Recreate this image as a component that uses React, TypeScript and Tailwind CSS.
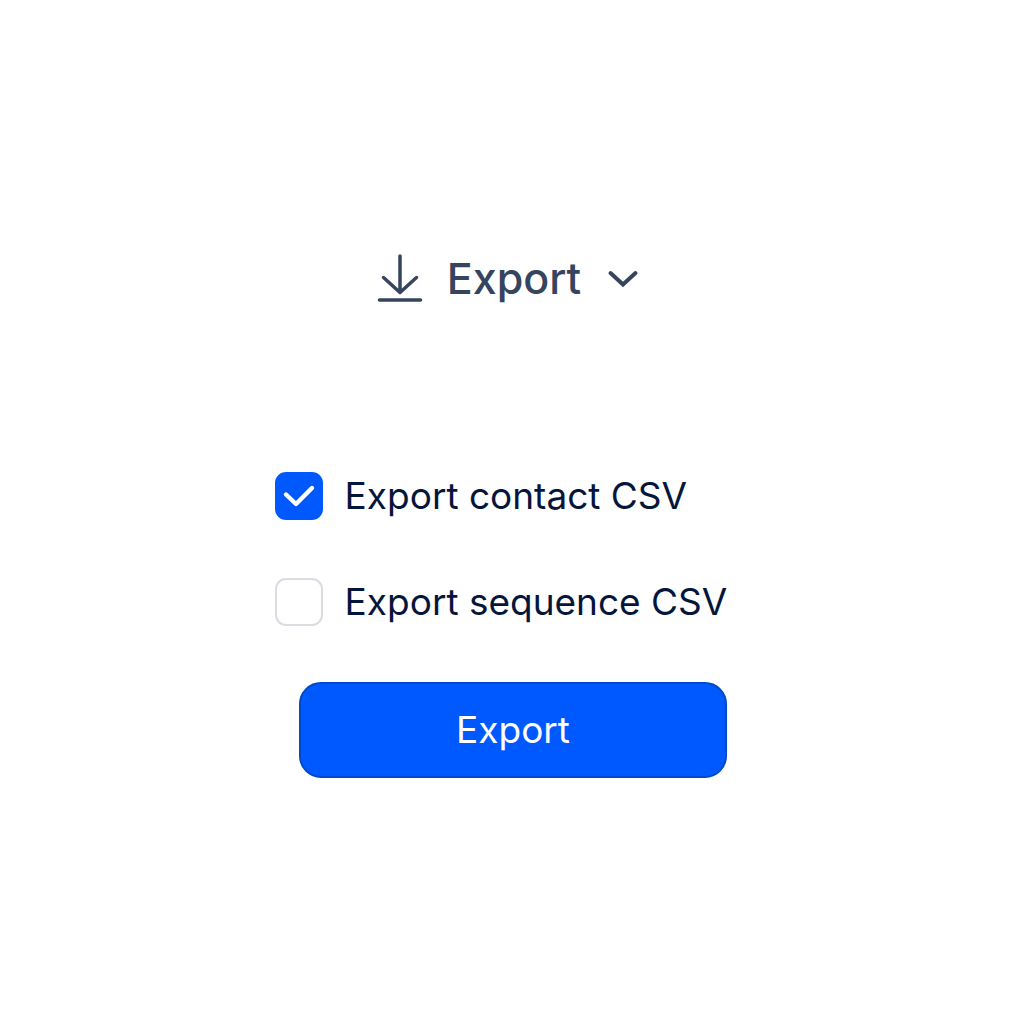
import React, { useState } from 'react';

function Option({ id, label, checked, onChange }: { id: string; label: string; checked: boolean; onChange: (v: boolean) => void }) {
  return (
    <div className="flex h-12 items-center gap-[22px]">
      <span className="relative flex size-12">
        <input
          id={id}
          type="checkbox"
          checked={checked}
          onChange={(e) => onChange(e.target.checked)}
          className="size-12 appearance-none rounded-[11px] border-2 border-[#dbdce2] bg-white checked:border-[#0059ff] checked:bg-[#0059ff]"
        />
        {checked && (
          <svg className="pointer-events-none absolute inset-0" width="48" height="48" viewBox="0 0 48 48" fill="none" stroke="white" strokeWidth="4.4" strokeLinecap="round" strokeLinejoin="round" aria-hidden="true">
            <path d="M11 22.5L21 32L37 16" />
          </svg>
        )}
      </span>
      <label htmlFor={id} className="whitespace-nowrap text-[37px] leading-12 text-[#06163a]">
        {label}
      </label>
    </div>
  );
}

export default function App() {
  const [contact, setContact] = useState(true);
  const [sequence, setSequence] = useState(false);
  return (
    <main className="flex min-h-screen flex-col items-center bg-white pt-[248px] font-['Inter',sans-serif]">
      <button type="button" className="mr-2 flex h-15 items-center text-[#36455e]">
        <svg width="46" height="52" viewBox="0 0 46 52" fill="none" stroke="currentColor" strokeWidth="3.5" strokeLinecap="round" strokeLinejoin="round" aria-hidden="true">
          <path d="M23 4V40.5M6.5 25.5L23 40.5L39.5 25.5M2.5 48H43.5" />
        </svg>
        <span className="ml-6 text-[43px] leading-15 font-medium">Export</span>
        <svg className="ml-[26px]" width="32" height="22" viewBox="0 0 32 22" fill="none" stroke="currentColor" strokeWidth="4" strokeLinecap="round" aria-hidden="true">
          <path d="M3.5 6L16 17.5L28.5 6" />
        </svg>
      </button>
      <form className="mt-41 mr-[22px] flex flex-col" onSubmit={(e) => e.preventDefault()}>
        <div className="flex flex-col gap-[58px]">
          <Option id="contact" label="Export contact CSV" checked={contact} onChange={setContact} />
          <Option id="sequence" label="Export sequence CSV" checked={sequence} onChange={setSequence} />
        </div>
        <button type="submit" className="mt-14 ml-6 h-24 rounded-[22px] border-2 border-[#004ac8] bg-[#0059ff] text-[37px] text-white">
          Export
        </button>
      </form>
    </main>
  );
}
